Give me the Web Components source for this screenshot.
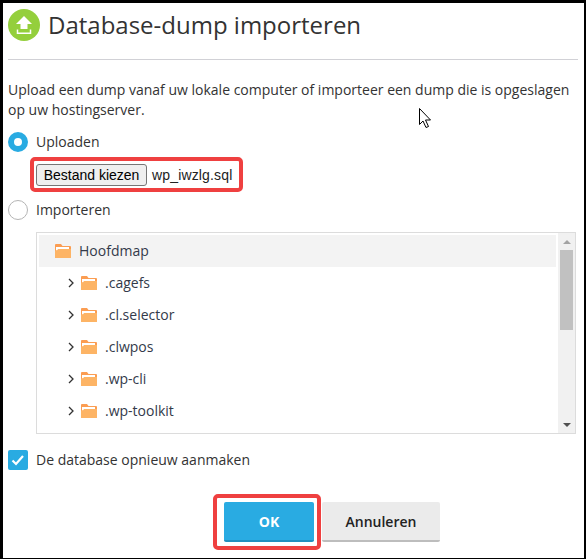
<!doctype html>
<html lang="nl">
<head>
<meta charset="utf-8">
<title>Database-dump importeren</title>
<style>
  html, body { margin: 0; height: 100%; }
  body { background: #fff; font: 14px/20px "Open Sans", sans-serif; color: #222; }
</style>
</head>
<body>
<dump-dialog>
  <dialog-header>Database-dump importeren</dialog-header>
  <p>Upload een dump vanaf uw lokale computer of importeer een dump die is opgeslagen op uw hostingserver.</p>
  <radio-option checked>Uploaden</radio-option>
  <file-picker file="wp_iwzlg.sql"></file-picker>
  <radio-option>Importeren</radio-option>
  <folder-tree>
    <tree-row root>Hoofdmap</tree-row>
    <tree-row>.cagefs</tree-row>
    <tree-row>.cl.selector</tree-row>
    <tree-row>.clwpos</tree-row>
    <tree-row>.wp-cli</tree-row>
    <tree-row>.wp-toolkit</tree-row>
  </folder-tree>
  <check-option>De database opnieuw aanmaken</check-option>
  <dialog-actions>
    <action-button primary>OK</action-button>
    <action-button>Annuleren</action-button>
  </dialog-actions>
</dump-dialog>

<script>
class DumpDialog extends HTMLElement {
  constructor() {
    super();
    const shadow = this.attachShadow({ mode: "open" });
    shadow.innerHTML = `
      <style>
        :host {
          display: block;
          position: relative;
          box-sizing: border-box;
          width: 586px;
          height: 559px;
          overflow: hidden;
          border-style: solid;
          border-color: #000;
          border-width: 3px 2px 1px 3px;
          padding: 6px 6px 0 5px;
        }
        ::slotted(p) {
          margin: 20px 0 12px;
          font-size: 14px;
          line-height: 20px;
          color: #333;
        }
        .cursor {
          position: absolute;
          left: 416px;
          top: 105px;
        }
      </style>
      <slot></slot>
      <svg class="cursor" width="13" height="21" viewBox="0 0 13 21">
        <path d="M.5.5v16l3.500-3.500 3 6.500 2.500-1-3-6.500h5z" fill="#fff" stroke="#000" stroke-width="1"/>
      </svg>
    `;
  }
}

class DialogHeader extends HTMLElement {
  constructor() {
    super();
    const shadow = this.attachShadow({ mode: "open" });
    shadow.innerHTML = `
      <style>
        :host {
          display: flex;
          align-items: flex-start;
          gap: 8px;
          height: 50px;
          border-bottom: 1px solid #d1d1d6;
        }
        svg { flex: none; }
        h1 {
          margin: 0;
          font: 400 24px/32px "Open Sans", sans-serif;
          color: #333;
        }
      </style>
      <svg width="32" height="32" viewBox="0 0 32 32">
        <circle cx="16" cy="16" r="16" fill="#94cf3c"/>
        <path d="M16 7l8 8h-4.500v5h-7v-5H8z" fill="#fff"/>
        <path d="M9.500 20.500v3.750h13V20.500" fill="none" stroke="#fff" stroke-width="1.500"/>
      </svg>
      <h1><slot></slot></h1>
    `;
  }
}

class RadioOption extends HTMLElement {
  constructor() {
    super();
    const shadow = this.attachShadow({ mode: "open" });
    shadow.innerHTML = `
      <style>
        :host {
          display: flex;
          align-items: center;
          gap: 8px;
          height: 20px;
          color: #333;
        }
        .dot {
          box-sizing: border-box;
          width: 20px;
          height: 20px;
          border-radius: 50%;
          border: 1px solid #b5b5b5;
          background: #fff;
        }
        :host([checked]) .dot {
          border: 6px solid #29abe2;
        }
      </style>
      <span class="dot"></span>
      <slot></slot>
    `;
  }
}

class FilePicker extends HTMLElement {
  constructor() {
    super();
    const shadow = this.attachShadow({ mode: "open" });
    shadow.innerHTML = `
      <style>
        :host {
          display: flex;
          align-items: center;
          box-sizing: border-box;
          width: 213px;
          height: 35px;
          margin: 5px 0 8px 22px;
          padding-left: 2px;
          gap: 5px;
          border: 4px solid #ef4040;
          border-radius: 5px;
          font: 14px "Liberation Sans", Arial, sans-serif;
          color: #222;
        }
        button {
          box-sizing: border-box;
          width: 111px;
          height: 22px;
          padding: 0;
          background: #efefef;
          border: 1px solid #767676;
          border-radius: 3px;
          font: inherit;
          color: #000;
        }
        .name { letter-spacing: .15px; }
      </style>
      <button type="button">Bestand kiezen</button>
      <span class="name"></span>
    `;
    shadow.querySelector(".name").textContent = this.getAttribute("file");
  }
}

class FolderTree extends HTMLElement {
  constructor() {
    super();
    const shadow = this.attachShadow({ mode: "open" });
    shadow.innerHTML = `
      <style>
        :host {
          display: flex;
          box-sizing: border-box;
          width: 540px;
          height: 202px;
          margin: 12px 0 16px 28px;
          padding: 2px 0 0 2px;
          border: 1px solid #dcdcdc;
          overflow: hidden;
        }
        .rows {
          flex: 1;
          min-width: 0;
        }
        .bar {
          flex: none;
          display: flex;
          flex-direction: column;
          align-items: center;
          width: 17px;
          margin: -2px 0 0 2px;
          background: #f1f1f1;
        }
        .arrow {
          flex: none;
          height: 17px;
          display: flex;
          align-items: center;
          justify-content: center;
        }
        .track { flex: 1; width: 100%; display: flex; justify-content: center; }
        .thumb {
          width: 13px;
          height: 80px;
          background: #c1c1c1;
        }
      </style>
      <div class="rows"><slot></slot></div>
      <div class="bar">
        <span class="arrow"><svg width="8" height="4" viewBox="0 0 8 4"><path d="M4 0l4 4H0z" fill="#a3a3a3"/></svg></span>
        <span class="track"><span class="thumb"></span></span>
        <span class="arrow"><svg width="8" height="4" viewBox="0 0 8 4"><path d="M0 0h8L4 4z" fill="#505050"/></svg></span>
      </div>
    `;
  }
}

class TreeRow extends HTMLElement {
  constructor() {
    super();
    const shadow = this.attachShadow({ mode: "open" });
    shadow.innerHTML = `
      <style>
        :host {
          display: flex;
          align-items: center;
          height: 32px;
          padding-left: 29px;
          color: #333a4a;
        }
        :host([root]) {
          padding-left: 16px;
          background: #f3f3f3;
        }
        .chev { margin-right: 7px; }
        .folder { margin-right: 8px; flex: none; }
      </style>
      ${this.hasAttribute("root") ? "" : `
      <svg class="chev" width="6" height="10" viewBox="0 0 6 10"><path d="M1 1l4 4-4 4" fill="none" stroke="#333" stroke-width="1.300"/></svg>`}
      <svg class="folder" width="16" height="14" viewBox="0 0 16 14">
        <path d="M0 1c0-.500.500-1 1-1h5l1.500 2H15c.500 0 1 .500 1 1v10c0 .500-.500 1-1 1H1c-.500 0-1-.500-1-1z" fill="#fb9d52"/>
        <path d="M1 3h13v3.500H1z" fill="#fff"/>
        <path d="M0 6.500h2l1-1.500h13v8c0 .500-.500 1-1 1H1c-.500 0-1-.500-1-1z" fill="#fdb465"/>
      </svg>
      <slot></slot>
    `;
  }
}

class CheckOption extends HTMLElement {
  constructor() {
    super();
    const shadow = this.attachShadow({ mode: "open" });
    shadow.innerHTML = `
      <style>
        :host {
          display: flex;
          align-items: center;
          gap: 8px;
          height: 20px;
          color: #333;
        }
        svg { flex: none; }
      </style>
      <svg width="20" height="20" viewBox="0 0 20 20">
        <rect width="20" height="20" rx="2" fill="#29abe2"/>
        <path d="M4.500 10.500l3.500 3.500 7-8" fill="none" stroke="#fff" stroke-width="2.200"/>
      </svg>
      <slot></slot>
    `;
  }
}

class DialogActions extends HTMLElement {
  constructor() {
    super();
    const shadow = this.attachShadow({ mode: "open" });
    shadow.innerHTML = `
      <style>
        :host {
          display: flex;
          align-items: flex-start;
          margin: 32px 0 0 216px;
          gap: 8px;
        }
      </style>
      <slot></slot>
    `;
  }
}

class ActionButton extends HTMLElement {
  constructor() {
    super();
    const shadow = this.attachShadow({ mode: "open" });
    shadow.innerHTML = `
      <style>
        :host {
          display: block;
          position: relative;
          flex: none;
        }
        button {
          display: block;
          box-sizing: border-box;
          width: 118px;
          height: 40px;
          padding: 0;
          border: 0;
          border-bottom: 2px solid #bdbdbd;
          border-radius: 2px;
          background: #ebebeb;
          font: 600 14px "Open Sans", sans-serif;
          color: #222;
        }
        :host([primary]) button {
          width: 90px;
          background: #29abe2;
          border-bottom-color: #2290bf;
          color: #fff;
          font-weight: 700;
        }
        /* red marker drawn over the screenshot */
        :host([primary])::after {
          content: "";
          position: absolute;
          inset: -8px -7px -8px -11px;
          border: 4px solid #ef4040;
          border-radius: 5px;
          pointer-events: none;
        }
      </style>
      <button type="button"><slot></slot></button>
    `;
  }
}

customElements.define("dump-dialog", DumpDialog);
customElements.define("dialog-header", DialogHeader);
customElements.define("radio-option", RadioOption);
customElements.define("file-picker", FilePicker);
customElements.define("folder-tree", FolderTree);
customElements.define("tree-row", TreeRow);
customElements.define("check-option", CheckOption);
customElements.define("dialog-actions", DialogActions);
customElements.define("action-button", ActionButton);
</script>
</body>
</html>
